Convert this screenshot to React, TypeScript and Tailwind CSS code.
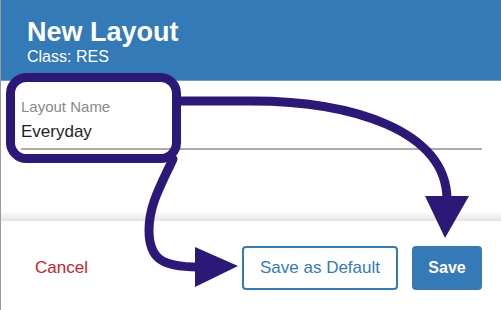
import React from "react";

const NewLayoutDialog = () => {
  return (
    <div className="relative w-[501px] h-[310px] overflow-hidden bg-white border-l border-[#9a9a9a] font-['Liberation_Sans',Arial,sans-serif]">
      {/* Header */}
      <div className="h-[81px] bg-[#347ab6] border-b border-[#6b9fd0] px-[26px] pt-[19px] text-white">
        <div className="text-[27px] font-bold leading-none">New Layout</div>
        <div className="mt-[3px] text-[16px] leading-none">Class: RES</div>
      </div>

      {/* Body */}
      <div className="h-[130px] pl-[20px] pr-[19px] pt-[18px]">
        <label className="block text-[15px] leading-none text-[#8a8a8a]">Layout Name</label>
        <div className="mt-[9px] text-[17px] leading-none text-[#1e1e1e]">Everyday</div>
        <div className="mt-[8px] h-[2px] bg-[#ababab]" />
      </div>
      <div className="h-[10px] bg-gradient-to-b from-white to-[#e4e4e4]" />

      {/* Footer */}
      <div className="flex items-center justify-between pl-[34px] pr-[19px] pt-[25px]">
        <button type="button" className="text-[17px] text-[#c6222d]">
          Cancel
        </button>
        <div className="flex gap-[14px]">
          <button type="button" className="w-[156px] h-[44px] rounded-[4px] border-2 border-[#347ab6] text-[17px] text-[#347ab6]">
            Save as Default
          </button>
          <button type="button" className="w-[70px] h-[44px] rounded-[4px] bg-[#347ab6] text-[16px] font-bold text-white">
            Save
          </button>
        </div>
      </div>

      {/* Annotation overlay */}
      <svg className="absolute inset-0 pointer-events-none" width="501" height="310" viewBox="0 0 501 310">
        <g fill="none" stroke="#2c1877" strokeWidth="9" strokeLinecap="round">
          <rect x="9.5" y="77.5" width="166" height="81" rx="16" />
          <path d="M176 101 L250 101 C350 101 446 130 446 200" />
          <path d="M172 159 C160 185 148 205 148 230 C148 258 160 267 197 267" />
        </g>
        <polygon points="424,196 468,196 444,238" fill="#2c1877" />
        <polygon points="194,247 194,287 237,266" fill="#2c1877" />
      </svg>
    </div>
  );
};

export default function App() {
  return <NewLayoutDialog />;
}
